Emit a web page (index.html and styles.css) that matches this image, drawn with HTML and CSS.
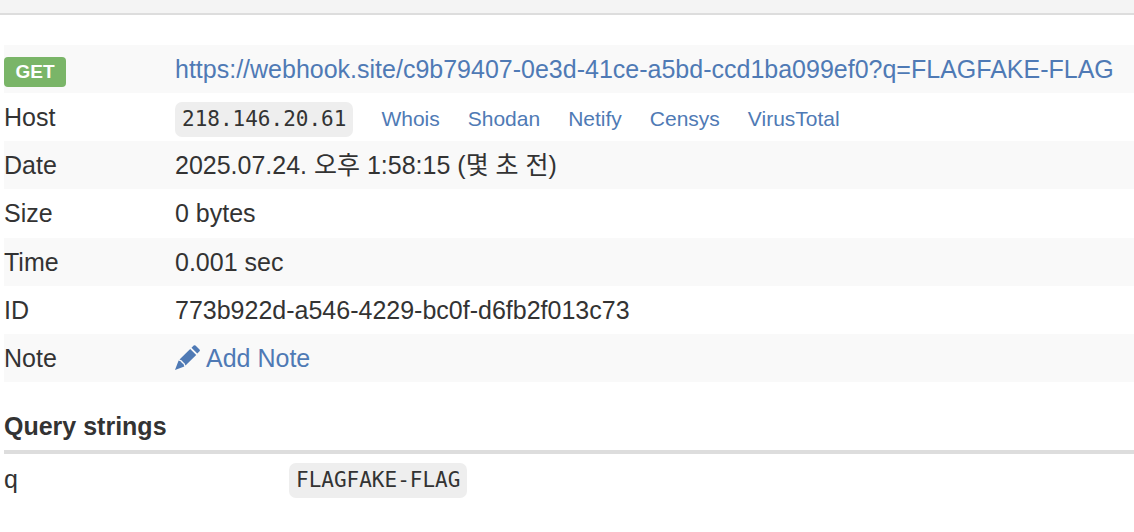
FILE: index.html
```html
<!DOCTYPE html>
<html lang="ko">
<head>
<meta charset="utf-8">
<title>Request details</title>
<link rel="stylesheet" href="styles.css">
</head>
<body>
<header class="topbar"></header>
<main class="content">
<table class="details">
<tbody>
<tr><td class="key"><span class="method">GET</span></td><td><a href="#request">https://webhook.site/c9b79407-0e3d-41ce-a5bd-ccd1ba099ef0?q=FLAGFAKE-FLAG</a></td></tr>
<tr><td class="key">Host</td><td><div class="host"><code>218.146.20.61</code><a href="#whois">Whois</a><a href="#shodan">Shodan</a><a href="#netify">Netify</a><a href="#censys">Censys</a><a href="#virustotal">VirusTotal</a></div></td></tr>
<tr><td class="key">Date</td><td>2025.07.24. 오후 1:58:15 (몇 초 전)</td></tr>
<tr><td class="key">Size</td><td>0 bytes</td></tr>
<tr><td class="key">Time</td><td>0.001 sec</td></tr>
<tr><td class="key">ID</td><td>773b922d-a546-4229-bc0f-d6fb2f013c73</td></tr>
<tr><td class="key">Note</td><td><a class="note" href="#note"><svg class="pencil" viewBox="0 0 25 25" aria-hidden="true"><path d="M16.500 2.700 18.700.6q.9-.8 1.800 0l4 4q.8.9 0 1.700L22.300 8.500ZM15.200 3.900 21.200 9.900 10.500 20.500Q9.800 17.500 8 17 7.500 15.200 4.500 14.500ZM3.600 15.600Q6.600 16.200 6.900 18.100 8.900 18.500 9.300 21.500L0 25Z"/></svg>Add Note</a></td></tr>
</tbody>
</table>
<h2 class="heading">Query strings</h2>
<table class="query">
<tbody>
<tr><td class="param">q</td><td><code>FLAGFAKE-FLAG</code></td></tr>
</tbody>
</table>
</main>
</body>
</html>
```
FILE: styles.css
```css
* { box-sizing: border-box; }
body {
  margin: 0;
  background: #fff;
  color: #333;
  font: 25px/36px "Liberation Sans", Arial, "Noto Sans CJK KR", sans-serif;
}
a { color: #4f7ab5; text-decoration: none; }
.topbar { height: 15px; background: #f4f4f4; border-bottom: 2px solid #ddd; }
.content { padding: 30px 0 0 4px; }
table { width: 100%; border-collapse: collapse; table-layout: fixed; }
td { height: 48px; padding: 0; vertical-align: middle; white-space: nowrap; }
.details { height: 337px; }
.details tr:nth-child(odd) { background: #f9f9f9; }
.key { width: 171px; }
.method {
  display: block;
  width: 62px;
  margin-top: 6px;
  border-radius: 4px;
  background: #7ab568;
  color: #fff;
  font-size: 19px;
  font-weight: bold;
  line-height: 30px;
  text-align: center;
}
.host { display: flex; align-items: baseline; gap: 28px; padding-top: 3px; font-size: 21px; }
code {
  display: inline-block;
  padding: 0 7px;
  border-radius: 7px;
  background: #eee;
  font: 21px/35px "DejaVu Sans Mono", monospace;
}
.note { display: flex; align-items: center; gap: 6px; }
.pencil { width: 25px; height: 25px; fill: #4f7ab5; }
.heading {
  margin: 24px 0 0;
  padding: 2px 0 6px;
  border-bottom: 4px solid #ddd;
  font-size: 25px;
  line-height: 36px;
}
.param { width: 285px; }
.query td { height: 50px; }
```
